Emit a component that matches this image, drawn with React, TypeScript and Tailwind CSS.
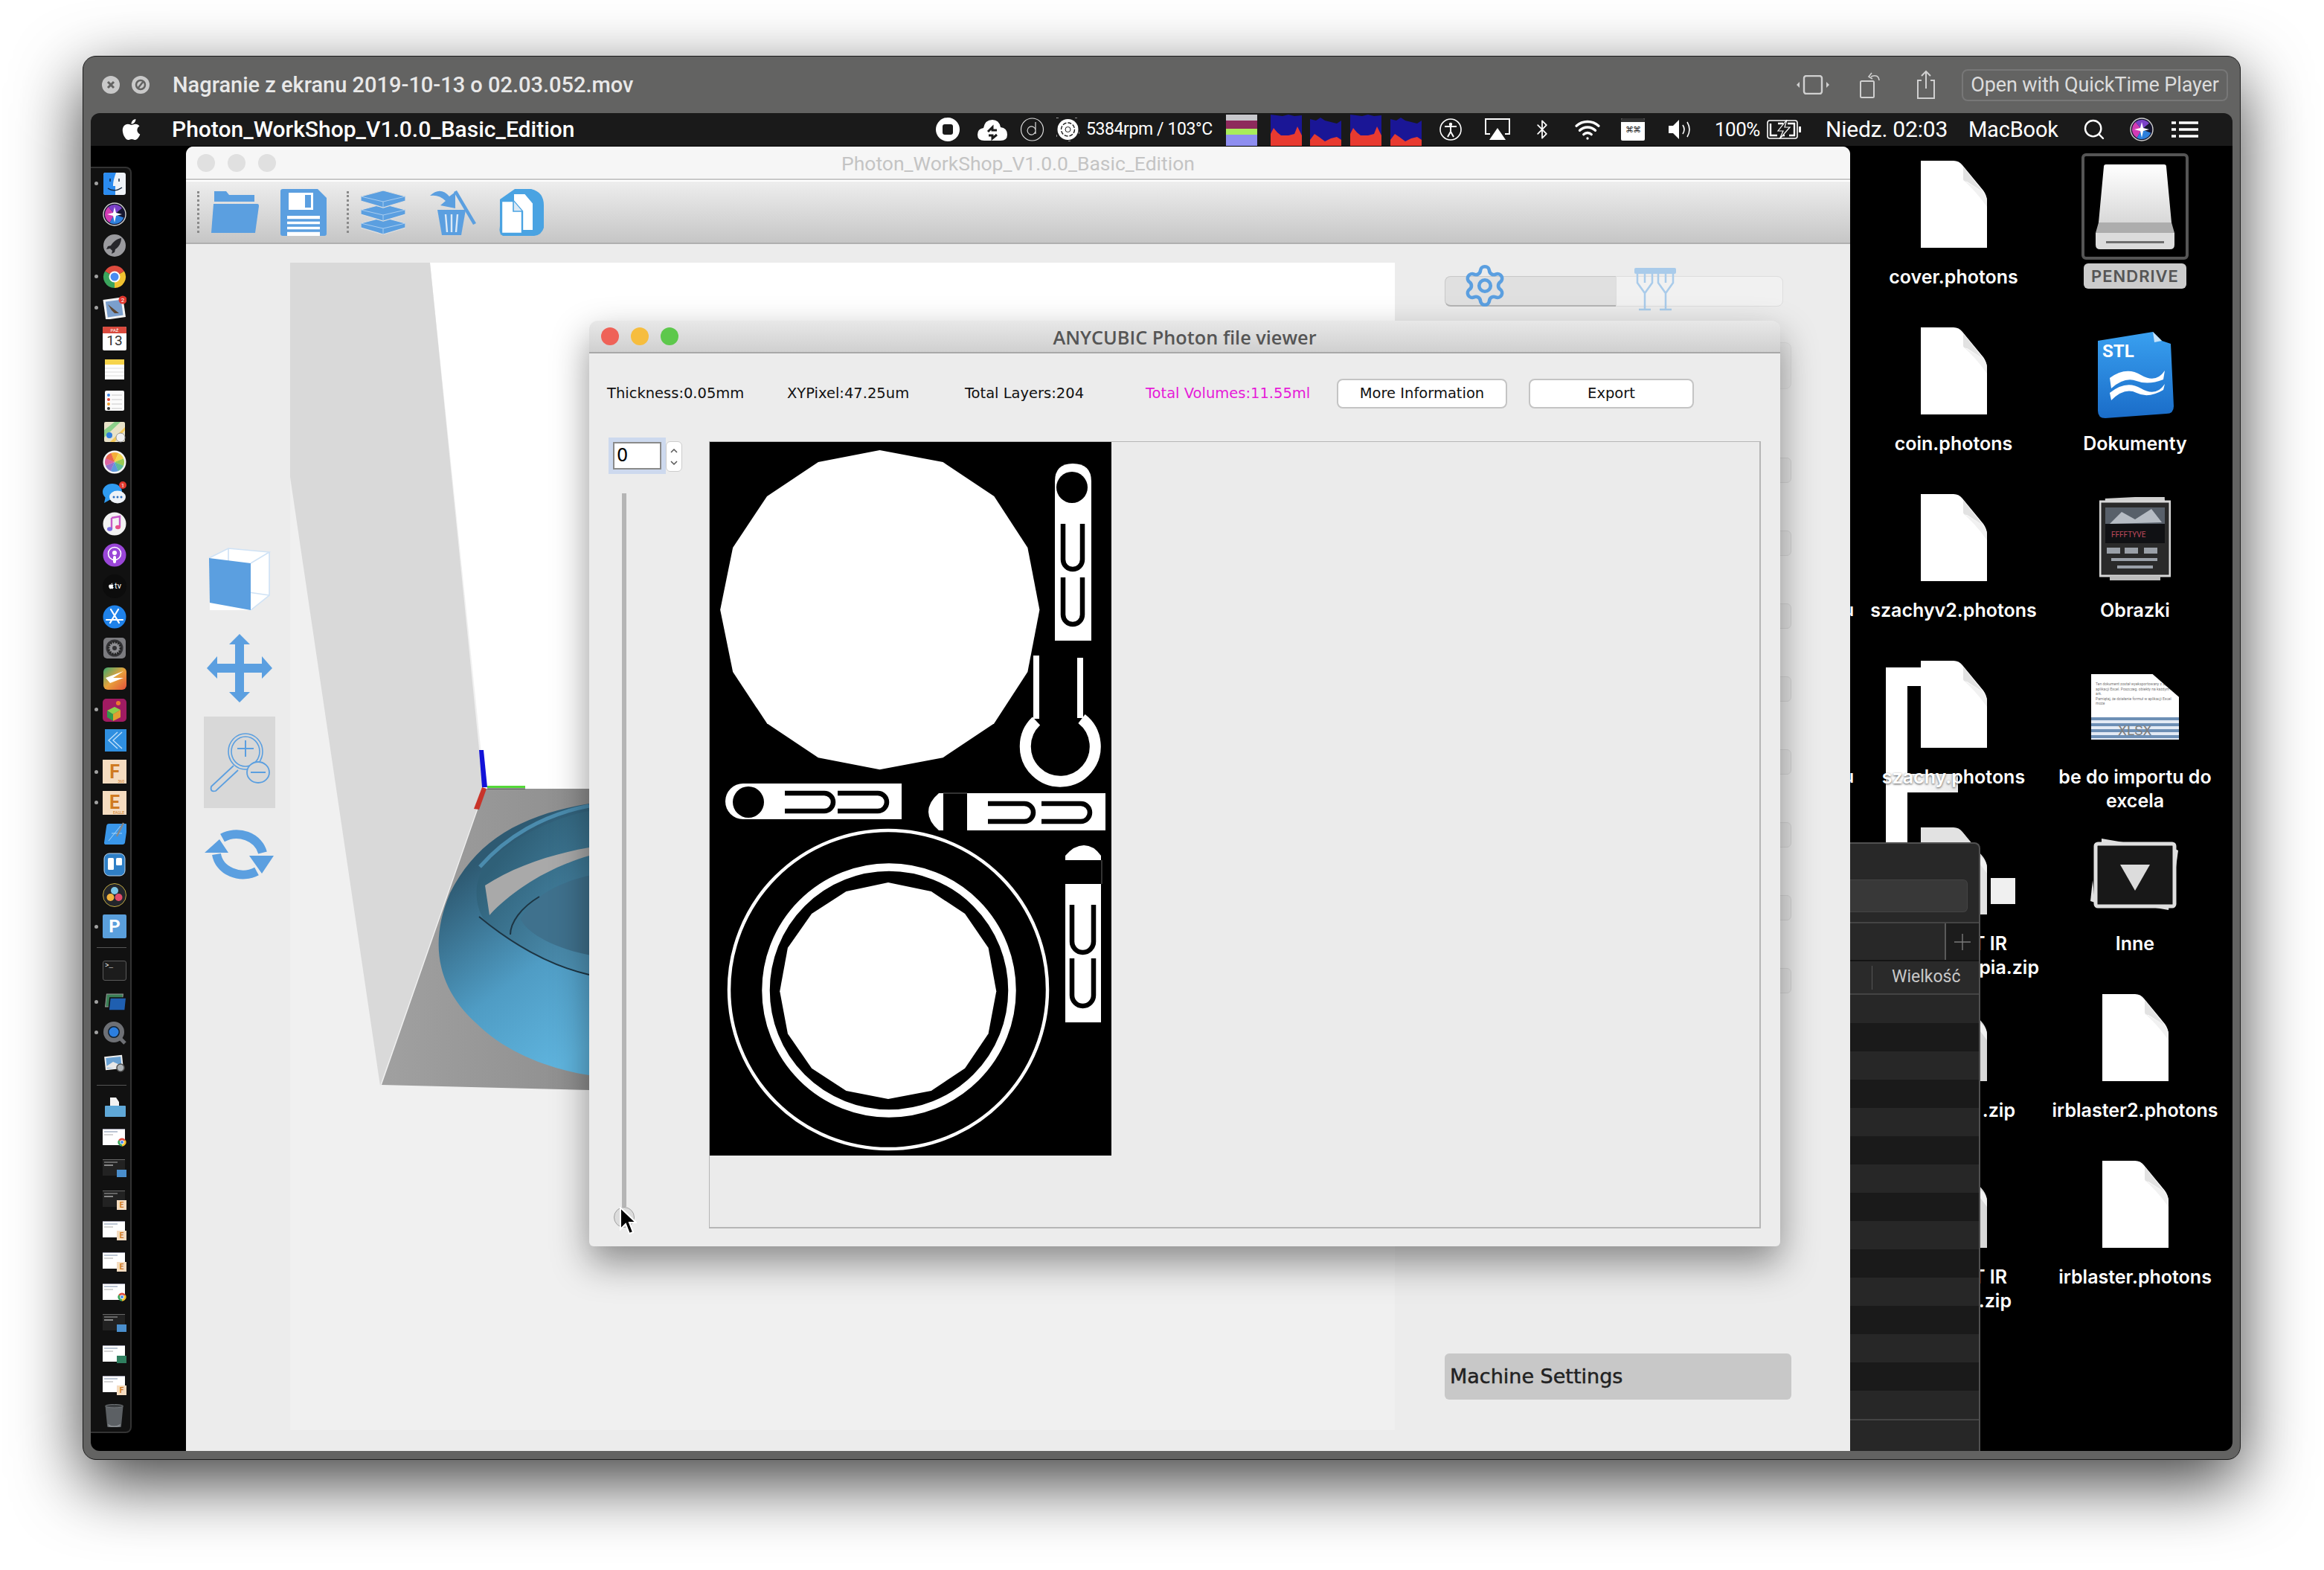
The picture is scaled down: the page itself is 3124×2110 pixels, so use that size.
import React from "react";
import { FaApple } from "react-icons/fa";
import { Settings, Search, Bluetooth, Wifi } from "lucide-react";

const BLUE = "#5b9fe0";

function sector(cx: number, cy: number, r: number, a0: number, a1: number) {
  const rad = (a: number) => (a * Math.PI) / 180;
  const x0 = cx + r * Math.cos(rad(a0));
  const y0 = cy + r * Math.sin(rad(a0));
  const x1 = cx + r * Math.cos(rad(a1));
  const y1 = cy + r * Math.sin(rad(a1));
  return `M${cx},${cy} L${x0},${y0} A${r},${r} 0 ${a1 - a0 > 180 ? 1 : 0} 1 ${x1},${y1} Z`;
}

function DocIcon({ tone = "#ffffff" }: { tone?: string }) {
  return (
    <svg width="89" height="117" viewBox="0 0 89 117">
      <path d="M0,0 H44 C49,0 53,2 56,6 L84,40 C87,44 89,49 89,54 V117 H0 Z" fill={tone} />
      <path d="M57,8 V24 C57,27 59,28 62,28 L84,42 Z" fill="#e2e2e2" />
      <path d="M57,26 L84,42 C87,46 89,50 89,54 V62 C78,46 66,34 57,26 Z" fill="#f1f1f1" />
    </svg>
  );
}

function DiskIcon() {
  return (
    <svg width="106" height="114" viewBox="0 0 106 114">
      <defs>
        <linearGradient id="diskTop" x1="0" y1="0" x2="0" y2="1">
          <stop offset="0" stopColor="#ffffff" />
          <stop offset="1" stopColor="#d8d8d8" />
        </linearGradient>
      </defs>
      <path d="M11,3 Q11,0 14,0 H92 Q95,0 95,3 L102,78 H4 Z" fill="url(#diskTop)" />
      <path d="M4,78 H102 L106,92 H0 Z" fill="#adadad" />
      <path d="M0,92 H106 V108 Q106,114 100,114 H6 Q0,114 0,108 Z" fill="#dcdcdc" />
      <rect x="14" y="103" width="78" height="3" fill="#6f6f6f" />
    </svg>
  );
}

function StlFolder() {
  return (
    <svg width="104" height="116" viewBox="0 0 104 116" className="mt-[6px]">
      <defs>
        <linearGradient id="stlBlue" x1="0" y1="0" x2="0" y2="1">
          <stop offset="0" stopColor="#39a0f0" />
          <stop offset="1" stopColor="#1a6cc8" />
        </linearGradient>
      </defs>
      <path d="M2,12 L76,0 L88,12 L100,16 L104,100 Q104,110 94,110 L12,116 Q2,116 2,106 Z" fill="url(#stlBlue)" />
      <text x="8" y="34" fontSize="24" fontWeight="700" fill="#ffffff" fontFamily="Roboto, sans-serif">STL</text>
      <path d="M18,62 Q40,46 60,58 T92,52 L90,64 Q70,72 54,66 T20,76 Z" fill="#ffffff" />
      <path d="M18,82 Q40,64 60,76 T92,70 L90,78 Q70,90 54,82 T20,92 Z" fill="#ffffff" />
      <path d="M76,0 L88,12 L78,14 Z" fill="#c6e4fb" />
    </svg>
  );
}

function PosterIcon() {
  return (
    <svg width="96" height="112" viewBox="0 0 96 112" className="mt-[4px]">
      <rect x="8" y="0" width="80" height="12" fill="#cfcfcf" transform="rotate(-3 48 6)" />
      <rect x="1" y="6" width="94" height="100" fill="#2a2a2a" stroke="#d8d8d8" strokeWidth="3" />
      <rect x="8" y="14" width="80" height="22" fill="#58606a" />
      <path d="M14,36 L30,20 L48,30 L70,16 L84,34 Z" fill="#b6bcc4" />
      <rect x="8" y="36" width="80" height="26" fill="#101114" />
      <text x="16" y="54" fontSize="10" fill="#c04a5c" fontFamily="Roboto, sans-serif">FFFFTYVE</text>
      <g fill="#9aa0a8">
        <rect x="10" y="68" width="18" height="8" />
        <rect x="34" y="68" width="18" height="8" />
        <rect x="60" y="68" width="18" height="8" />
        <rect x="16" y="82" width="62" height="4" />
        <rect x="24" y="92" width="48" height="4" />
      </g>
      <rect x="14" y="106" width="68" height="6" fill="#bcbcbc" />
    </svg>
  );
}

function XlsxIcon() {
  return (
    <div className="relative w-[118px] h-[88px] mt-[18px] bg-white overflow-hidden [clip-path:polygon(0_0,70%_0,100%_35%,100%_100%,0_100%)]">
      <div className="flex flex-col pt-[10px] pl-[6px] gap-[1px] text-[5px] leading-[6px] text-[#777] font-[Roboto,sans-serif]">
        <span>Ten dokument został wyeksportowany z aplikacji</span>
        <span>aplikacji Excel. Poszczeg. obiekty na każdym z ark.</span>
        <span>Pamiętaj, że działanie formuł w aplikacji Excel może</span>
      </div>
      <div className="flex flex-col mt-[16px] bg-[#e3eaf4]">
        <div className="h-[4px] bg-[#6d8fb5] mb-[4px]" />
        <div className="h-[4px] bg-[#6d8fb5] mb-[4px]" />
        <div className="h-[4px] bg-[#6d8fb5] mb-[4px]" />
        <div className="h-[4px] bg-[#6d8fb5] mb-[4px]" />
        <div className="h-[4px] bg-[#6d8fb5] mb-[4px]" />
      </div>
      <span className="absolute left-[36px] bottom-[3px] text-[19px] leading-[19px] text-[#808080] font-[Roboto,sans-serif]">XLSX</span>
    </div>
  );
}

function StackIcon() {
  return (
    <svg width="120" height="100" viewBox="0 0 120 100" className="mt-[15px]">
      <path d="M15,0 L50,6 H15 Z" fill="#e0e0e0" />
      <path d="M114,14 L118,16 L114,46 Z" fill="#e0e0e0" />
      <path d="M3,56 L0,84 L6,86 Z" fill="#e0e0e0" />
      <path d="M70,90 L105,96 L106,88 Z" fill="#e0e0e0" />
      <rect x="7" y="7" width="106" height="84" rx="3" fill="#181818" stroke="#dfdfdf" strokeWidth="5" />
      <path d="M40,35 H80 L60,70 Z" fill="#dcdcdc" />
    </svg>
  );
}

type DeskItem = {
  icon: React.ReactNode;
  label: { text: string; cls?: string }[];
};

const deskItems: DeskItem[] = [
  { icon: <DocIcon />, label: [{ text: "cover.photons" }] },
  { icon: <DiskIcon />, label: [] },
  { icon: <DocIcon />, label: [{ text: "coin.photons" }] },
  { icon: <StlFolder />, label: [{ text: "Dokumenty" }] },
  { icon: <DocIcon />, label: [{ text: "szachyv2.photons" }] },
  { icon: <PosterIcon />, label: [{ text: "Obrazki" }] },
  { icon: <DocIcon />, label: [{ text: "szachy.photons" }] },
  { icon: <XlsxIcon />, label: [{ text: "be do importu do" }, { text: "excela" }] },
  { icon: <DocIcon tone="#e2e2e2" />, label: [{ text: "T IR", cls: "self-end pr-[50px]" }, { text: "pia.zip", cls: "self-end pr-[7px]" }] },
  { icon: <StackIcon />, label: [{ text: "Inne" }] },
  { icon: <DocIcon tone="#d8d8d8" />, label: [{ text: ".zip", cls: "self-end pr-[39px]" }] },
  { icon: <DocIcon />, label: [{ text: "irblaster2.photons" }] },
  { icon: <DocIcon tone="#d8d8d8" />, label: [{ text: "T IR", cls: "self-end pr-[50px]" }, { text: ".zip", cls: "self-end pr-[44px]" }] },
  { icon: <DocIcon />, label: [{ text: "irblaster.photons" }] },
];

function DockGlyph({ kind }: { kind: string }) {
  switch (kind) {
    case "finder":
      return (
        <svg viewBox="0 0 32 32" className="w-full h-full">
          <rect x="1" y="1" width="30" height="30" rx="3" fill="#eef2f7" />
          <path d="M4,1 H18 C15,9 14,14 14,19 H17 V31 H4 Q1,31 1,28 V4 Q1,1 4,1 Z" fill="#2b8bef" />
          <path d="M10,9 V13 M22,9 V13 M7,22 Q16,28 26,21" stroke="#10233c" strokeWidth="1.5" fill="none" />
        </svg>
      );
    case "siri":
      return (
        <svg viewBox="0 0 32 32" className="w-full h-full">
          <circle cx="16" cy="16" r="15" fill="#15152e" stroke="#d0d0d0" strokeWidth="1.4" />
          <path d={sector(16, 16, 13, 120, 230)} fill="#d23bb4" />
          <path d={sector(16, 16, 13, 230, 320)} fill="#7a40c8" />
          <path d={sector(16, 16, 13, 20, 120)} fill="#2d7fdc" />
          <path d="M16,6 L18,14 L26,16 L18,18 L16,27 L14,18 L6,16 L14,14 Z" fill="#ffffff" />
        </svg>
      );
    case "launch":
      return (
        <svg viewBox="0 0 32 32" className="w-full h-full">
          <circle cx="16" cy="16" r="15" fill="#9a9a9e" />
          <path d="M25,6 C19,7 14,11 11,16 L7,17 L5,21 L10,20 L13,23 L12,27 L16,25 L17,21 C22,18 25,12 25,6 Z" fill="#26262b" />
        </svg>
      );
    case "chrome":
      return (
        <svg viewBox="0 0 32 32" className="w-full h-full">
          <path d={sector(16, 16, 15, 210, 330)} fill="#dd4b3e" />
          <path d={sector(16, 16, 15, 90, 210)} fill="#3ba55d" />
          <path d={sector(16, 16, 15, -30, 90)} fill="#f2c230" />
          <circle cx="16" cy="16" r="7.5" fill="#ffffff" />
          <circle cx="16" cy="16" r="5.5" fill="#4a8cf0" />
        </svg>
      );
    case "mail":
      return (
        <svg viewBox="0 0 32 32" className="w-full h-full">
          <rect x="2" y="4" width="27" height="27" fill="#f3f3f3" transform="rotate(-8 16 16)" />
          <rect x="5" y="7" width="21" height="21" fill="#7b9fcc" transform="rotate(-8 16 16)" />
          <path d="M7,12 L22,24 L16,24 L12,20 Z" fill="#5e4630" />
          <circle cx="27" cy="6" r="5.5" fill="#e0382e" />
          <text x="27" y="9" fontSize="8" fill="#ffffff" textAnchor="middle" fontFamily="Roboto, sans-serif">2</text>
        </svg>
      );
    case "cal":
      return (
        <div className="w-full h-full flex flex-col bg-white rounded-[2px] overflow-hidden">
          <div className="h-[9px] bg-[#d94a3e] text-[6px] leading-[9px] text-center text-white font-[Roboto,sans-serif]">PAŹ</div>
          <div className="flex-1 text-[19px] leading-[20px] text-center text-[#333] font-[Roboto,sans-serif]">13</div>
        </div>
      );
    case "notes":
      return (
        <svg viewBox="0 0 32 32" className="w-full h-full">
          <rect x="3" y="3" width="26" height="27" fill="#fdfdfd" />
          <rect x="3" y="3" width="26" height="7" fill="#f6d44b" />
          <path d="M3,15 H29 M3,20 H29 M3,25 H29" stroke="#dcdcdc" />
        </svg>
      );
    case "remind":
      return (
        <svg viewBox="0 0 32 32" className="w-full h-full">
          <rect x="3" y="3" width="26" height="27" rx="2" fill="#fbfbfb" />
          <circle cx="8" cy="9" r="2" fill="#3a85e8" />
          <circle cx="8" cy="15" r="2" fill="#e04a3a" />
          <circle cx="8" cy="21" r="2" fill="#f0a030" />
          <circle cx="8" cy="27" r="2" fill="#333333" />
          <path d="M12,9 H26 M12,15 H26 M12,21 H26 M12,27 H26" stroke="#c8c8c8" />
        </svg>
      );
    case "maps":
      return (
        <svg viewBox="0 0 32 32" className="w-full h-full">
          <rect x="2" y="3" width="28" height="27" rx="2" fill="#e8e2c8" />
          <path d="M2,14 L16,3 H24 L2,24 Z" fill="#8ccf8a" />
          <path d="M10,30 L30,10 V14 L16,30 Z" fill="#f4c95a" />
          <circle cx="9" cy="21" r="4" fill="#2f7fe0" />
          <circle cx="24" cy="24" r="6" fill="#f0f0f0" stroke="#999" />
        </svg>
      );
    case "photos":
      return (
        <svg viewBox="0 0 32 32" className="w-full h-full">
          <circle cx="16" cy="16" r="15.5" fill="#f4f4f4" />
          {["#f5a623", "#f3d23b", "#8ec641", "#4fb58e", "#4f8fdc", "#8a63c9", "#d8549a", "#e8553f"].map((c, i) => (
            <path key={c} d={sector(16, 16, 13, i * 45 - 112, i * 45 - 66)} fill={c} opacity="0.9" />
          ))}
        </svg>
      );
    case "msg":
      return (
        <svg viewBox="0 0 32 32" className="w-full h-full">
          <ellipse cx="13" cy="14" rx="13" ry="11" fill="#2f9bf0" />
          <path d="M4,20 L2,29 L11,24 Z" fill="#2f9bf0" />
          <ellipse cx="20" cy="21" rx="11" ry="8.5" fill="#eef2f7" />
          <g fill="#2f6fc0">
            <circle cx="15" cy="21" r="1.5" />
            <circle cx="20" cy="21" r="1.5" />
            <circle cx="25" cy="21" r="1.5" />
          </g>
          <circle cx="27" cy="5" r="5" fill="#e0382e" />
          <text x="27" y="8" fontSize="8" fill="#ffffff" textAnchor="middle" fontFamily="Roboto, sans-serif">1</text>
        </svg>
      );
    case "music":
      return (
        <svg viewBox="0 0 32 32" className="w-full h-full">
          <circle cx="16" cy="16" r="15.5" fill="#f2f2f2" />
          <path d="M12,8 L23,6 V20 M12,8 V23" stroke="#c858c8" strokeWidth="2.4" fill="none" />
          <ellipse cx="9.5" cy="23" rx="3.5" ry="2.8" fill="#7a6ce0" />
          <ellipse cx="20.5" cy="20.5" rx="3.5" ry="2.8" fill="#e8508a" />
        </svg>
      );
    case "pod":
      return (
        <svg viewBox="0 0 32 32" className="w-full h-full">
          <circle cx="16" cy="16" r="15.5" fill="#9a46d8" />
          <circle cx="16" cy="14" r="8.5" fill="none" stroke="#ffffff" strokeWidth="1.6" />
          <circle cx="16" cy="13" r="3" fill="#ffffff" />
          <rect x="14" y="17" width="4" height="10" rx="2" fill="#ffffff" />
        </svg>
      );
    case "tv":
      return (
        <div className="w-full h-full rounded-full bg-[#0c0c0c] flex items-center justify-center text-white">
          <FaApple className="w-[9px] h-[9px]" />
          <span className="text-[11px] leading-[11px] font-[Roboto,sans-serif]">tv</span>
        </div>
      );
    case "store":
      return (
        <svg viewBox="0 0 32 32" className="w-full h-full">
          <circle cx="16" cy="16" r="15.5" fill="#1f82ea" />
          <path d="M11,6 L22,24 M21,6 L10,24 M5,20 H27" stroke="#ffffff" strokeWidth="2.2" strokeLinecap="round" />
        </svg>
      );
    case "prefs":
      return (
        <svg viewBox="0 0 32 32" className="w-full h-full">
          <rect x="1" y="2" width="30" height="28" rx="5" fill="#7c7c80" />
          <circle cx="16" cy="16" r="11.5" fill="#333336" />
          <circle cx="16" cy="16" r="8" fill="#8e8e92" stroke="#222" strokeDasharray="2 1.5" strokeWidth="3" />
          <circle cx="16" cy="16" r="3" fill="#333336" />
        </svg>
      );
    case "kite":
      return (
        <svg viewBox="0 0 32 32" className="w-full h-full">
          <defs>
            <linearGradient id="kiteBg" x1="0" y1="0" x2="1" y2="1">
              <stop offset="0" stopColor="#3aa870" />
              <stop offset="0.5" stopColor="#e8a23c" />
              <stop offset="1" stopColor="#e2503a" />
            </linearGradient>
          </defs>
          <rect x="1" y="1" width="31" height="30" rx="6" fill="url(#kiteBg)" />
          <path d="M4,15 L28,6 L14,15 L28,15 L10,22 Z" fill="#ffffff" />
        </svg>
      );
    case "pink":
      return (
        <svg viewBox="0 0 32 32" className="w-full h-full">
          <rect x="0" y="1" width="32" height="31" rx="5" fill="#a01b62" />
          <path d="M6,17 L16,12 L24,16 L14,22 Z" fill="#8ed04a" />
          <path d="M6,17 L14,22 V31 L6,26 Z" fill="#2f9a4c" />
          <path d="M14,22 L24,16 V26 L14,31 Z" fill="#e0a030" />
          <circle cx="21" cy="7" r="3" fill="#ea7a30" />
        </svg>
      );
    case "blue":
      return (
        <svg viewBox="0 0 32 32" className="w-full h-full">
          <rect x="3" y="1" width="29" height="30" fill="#2f8fe0" />
          <path d="M20,5 L8,16 L20,27 M26,5 L14,16 L26,27" stroke="#bfe0fa" strokeWidth="1.4" fill="none" />
        </svg>
      );
    case "F":
    case "E":
      return (
        <div className="relative w-full h-full flex items-center justify-center bg-[#f5dcc0] text-[25px] leading-[25px] font-bold text-[#cf7a22] font-[Roboto,sans-serif]">
          {kind}
          <span className="absolute bottom-0 right-[3px] text-[5px] leading-[6px] font-normal text-[#cf7a22]">{kind === "F" ? "360" : "EAGLE"}</span>
        </div>
      );
    case "xcode":
      return (
        <svg viewBox="0 0 32 32" className="w-full h-full">
          <rect x="2" y="3" width="28" height="28" rx="3" fill="#3a97ea" transform="skewX(-8) translate(4 0)" />
          <path d="M8,26 L24,6 M12,16 H26" stroke="#a6d4f8" strokeWidth="1" />
          <path d="M28,2 L19,20" stroke="#888" strokeWidth="2.4" />
        </svg>
      );
    case "trello":
      return (
        <svg viewBox="0 0 32 32" className="w-full h-full">
          <rect x="2" y="1" width="28" height="30" rx="7" fill="#2f7fc6" stroke="#bcd7ef" />
          <rect x="7" y="7" width="8" height="16" rx="1.5" fill="#ffffff" />
          <rect x="18" y="7" width="8" height="10" rx="1.5" fill="#ffffff" />
        </svg>
      );
    case "resolve":
      return (
        <svg viewBox="0 0 32 32" className="w-full h-full">
          <circle cx="16" cy="16" r="15.5" fill="#23262b" stroke="#c0a840" />
          <circle cx="16" cy="10" r="5" fill="#7dc7e8" />
          <circle cx="10.5" cy="19" r="5" fill="#f2b33d" />
          <circle cx="21.5" cy="19" r="5" fill="#e24b6a" />
        </svg>
      );
    case "P":
      return (
        <div className="w-full h-full flex items-center justify-center rounded-[2px] bg-[#5a9fdc] text-white text-[24px] leading-[24px] font-bold font-[Roboto,sans-serif]">P</div>
      );
    case "term":
      return (
        <div className="w-full h-[27px] rounded-[3px] bg-[#1c1c1c] border border-[#5a5a5a] pl-[2px] text-[9px] leading-[12px] text-white font-['Liberation_Mono',monospace]">&gt;_</div>
      );
    case "par":
      return (
        <svg viewBox="0 0 32 32" className="w-full h-full">
          <rect x="3" y="6" width="22" height="17" fill="#3a7f56" stroke="#9a9a9a" transform="skewX(-6) translate(3 0)" />
          <rect x="8" y="11" width="22" height="17" fill="#1f5fb0" stroke="#111" strokeWidth="1.6" transform="skewX(-6) translate(3 0)" />
        </svg>
      );
    case "qt":
      return (
        <svg viewBox="0 0 32 32" className="w-full h-full">
          <circle cx="15" cy="15" r="11" fill="#123" stroke="#6e7075" strokeWidth="6" />
          <circle cx="15" cy="15" r="6.5" fill="#2c7fe0" />
          <path d="M22,22 L30,30" stroke="#6e7075" strokeWidth="5" />
        </svg>
      );
    case "prev":
      return (
        <svg viewBox="0 0 32 32" className="w-full h-full">
          <rect x="3" y="6" width="24" height="18" fill="#eee" transform="rotate(-6 15 15)" />
          <rect x="5" y="8" width="20" height="14" fill="#6aa2d4" transform="rotate(-6 15 15)" />
          <path d="M5,20 L14,14 L25,19 V22 H5 Z" fill="#e8e8e8" />
          <circle cx="24" cy="22" r="5" fill="#aeb4b8" stroke="#555" strokeWidth="1.6" />
        </svg>
      );
    case "folder":
      return (
        <svg viewBox="0 0 32 32" className="w-full h-full">
          <path d="M10,4 H18 L22,10 V16 H10 Z" fill="#f2f2f2" />
          <rect x="3" y="15" width="28" height="15" rx="1" fill="#5fa8d8" />
        </svg>
      );
    case "trash":
      return (
        <svg viewBox="0 0 32 36" className="w-full h-full">
          <path d="M2,3 H29 L26,34 Q26,35 23,35 H8 Q5,35 5,34 Z" fill="#5c6064" />
          <ellipse cx="15.5" cy="3" rx="13.5" ry="2.5" fill="#3c3f42" stroke="#7a7e82" />
          <path d="M6,30 Q15,36 25,30 L24,34 Q15,36 7,34 Z" fill="#888c90" />
        </svg>
      );
    default:
      return null;
  }
}

function ShotThumb({ kind }: { kind: string }) {
  const dark = kind.startsWith("d");
  const badge = kind.slice(1);
  return (
    <div className="relative w-[34px] h-[24px]">
      <div className={dark ? "w-[30px] h-[22px] bg-[#222] border-t border-[#666]" : "w-[30px] h-[22px] bg-white border-t border-[#99a]"}>
        <div className={dark ? "mt-[2px] ml-[2px] w-[18px] h-[2px] bg-[#666]" : "mt-[2px] ml-[2px] w-[18px] h-[2px] bg-[#bcc6d4]"} />
        <div className={dark ? "mt-[2px] ml-[2px] w-[12px] h-[2px] bg-[#888]" : "mt-[2px] ml-[2px] w-[12px] h-[2px] bg-[#d4d4d4]"} />
      </div>
      {badge === "C" && (
        <div className="absolute right-0 bottom-0 w-[12px] h-[12px]">
          <DockGlyph kind="chrome" />
        </div>
      )}
      {(badge === "E" || badge === "F") && (
        <div className="absolute right-0 bottom-[-2px] w-[13px] h-[13px] bg-[#f5dcc0] text-[10px] leading-[13px] text-center font-bold text-[#cf7a22] font-[Roboto,sans-serif]">{badge}</div>
      )}
      {badge === "B" && <div className="absolute right-0 bottom-0 w-[13px] h-[10px] bg-[#4a8ecc]" />}
      {badge === "G" && <div className="absolute right-0 bottom-0 w-[13px] h-[10px] bg-[#2f7f5f]" />}
    </div>
  );
}

const dockA: [string, boolean][] = [
  ["finder", true], ["siri", false], ["launch", false], ["chrome", true], ["mail", true], ["cal", false],
  ["notes", false], ["remind", false], ["maps", false], ["photos", false], ["msg", false], ["music", false],
  ["pod", false], ["tv", false], ["store", false], ["prefs", false], ["kite", false], ["pink", true],
  ["blue", false], ["F", true], ["E", true], ["xcode", false], ["trello", false], ["resolve", false], ["P", true],
];
const dockB: [string, boolean][] = [["term", false], ["par", true], ["qt", true], ["prev", false]];
const dockC = ["wC", "dB", "dE", "wE", "wE", "wC", "dB", "wG", "wF"];

function DockRow({ dot, children }: { dot?: boolean; children: React.ReactNode }) {
  return (
    <div className="flex items-center h-[41.6px] shrink-0 pl-[5px]">
      <span className={dot ? "w-[5px] h-[5px] rounded-full bg-[#a0a0a0]" : "w-[5px] h-[5px]"} />
      <div className="ml-[6px] w-[32px] h-[32px] flex items-center justify-center">{children}</div>
    </div>
  );
}

function Dock() {
  return (
    <div className="absolute left-0 top-[28px] w-[55px] h-[1702px] bg-[#111111] border-y-2 border-r-2 border-[#333333] rounded-r-[8px] flex flex-col overflow-hidden">
      {dockA.map(([k, on]) => (
        <DockRow key={k} dot={on}>
          <DockGlyph kind={k} />
        </DockRow>
      ))}
      <div className="ml-[8px] mt-[7px] mb-[10px] h-[1px] w-[40px] shrink-0 bg-[#555]" />
      {dockB.map(([k, on]) => (
        <DockRow key={k} dot={on}>
          <DockGlyph kind={k} />
        </DockRow>
      ))}
      <div className="ml-[8px] mt-[8px] mb-[7px] h-[1px] w-[40px] shrink-0 bg-[#555]" />
      <DockRow>
        <DockGlyph kind="folder" />
      </DockRow>
      {dockC.map((k, i) => (
        <DockRow key={i}>
          <ShotThumb kind={k} />
        </DockRow>
      ))}
      <DockRow>
        <DockGlyph kind="trash" />
      </DockRow>
    </div>
  );
}

function MiniGraph({ peak }: { peak: boolean }) {
  return (
    <svg width="42" height="42" viewBox="0 0 42 42" className="shrink-0 self-end">
      <path
        d={peak ? "M0,0 L8,1 16,2 24,0 32,2 42,1 V42 H0 Z" : "M0,6 L8,8 14,4 20,8 28,10 36,12 42,8 V42 H0 Z"}
        fill="#1a1696"
      />
      <path
        d={peak ? "M0,26 L4,18 9,24 14,28 24,28 32,26 36,16 42,28 V42 H0 Z" : "M0,34 L6,26 12,30 20,36 28,32 36,30 42,34 V42 H0 Z"}
        fill="#e83a30"
      />
    </svg>
  );
}

function MenuBar() {
  return (
    <div className="flex items-center h-[44px] bg-[#1a1a1a] rounded-t-[12px] text-white font-[Roboto,sans-serif] whitespace-nowrap">
      <FaApple className="ml-[41px] w-[27px] h-[32px] shrink-0" />
      <span className="ml-[41px] w-[540px] text-[30px] leading-[44px] font-medium">Photon_WorkShop_V1.0.0_Basic_Edition</span>
      {/* status icons */}
      <svg width="32" height="32" viewBox="0 0 32 32" className="ml-[487px] shrink-0">
        <circle cx="16" cy="16" r="16" fill="#fff" />
        <rect x="9" y="9" width="14" height="14" rx="3" fill="#1a1a1a" />
      </svg>
      <svg width="40" height="30" viewBox="0 0 40 30" className="ml-[24px] shrink-0">
        <path d="M9,30 Q0,30 0,22 Q0,14 8,13 Q10,2 20,2 Q29,2 31,12 Q40,13 40,22 Q40,30 31,30 Z" fill="#fff" />
        <path d="M14,18 L20,12 V16 H26 M26,22 L20,27 V23 H15" stroke="#1a1a1a" strokeWidth="3" fill="none" />
      </svg>
      <svg width="33" height="32" viewBox="0 0 33 32" className="ml-[17px] shrink-0">
        <circle cx="16.5" cy="16" r="15" fill="none" stroke="#ddd" strokeWidth="1.2" />
        <path d="M21,6 V22 M21,17 A5.5,5.5 0 1 0 21,18" fill="none" stroke="#ddd" strokeWidth="1.2" />
      </svg>
      <svg width="31" height="32" viewBox="0 0 31 32" className="ml-[16px] shrink-0">
        <rect x="0" y="0" width="31" height="32" fill="#1a1a1a" stroke="#fff" strokeDasharray="3 22" />
        <circle cx="15.5" cy="16" r="14" fill="#fff" />
        <circle cx="15.5" cy="16" r="9" fill="none" stroke="#1a1a1a" strokeWidth="1.4" strokeDasharray="5 2" />
        <circle cx="15.5" cy="16" r="3.5" fill="none" stroke="#1a1a1a" />
      </svg>
      <span className="ml-[9px] w-[178px] text-[23px] tracking-[-0.4px] leading-[44px]">5384rpm / 103°C</span>
      <div className="ml-[10px] w-[42px] h-[42px] self-end flex flex-col shrink-0">
        <div className="h-[8px] bg-[#c8c8cc]" />
        <div className="h-[11px] bg-[#8e2a5c]" />
        <div className="h-[8px] bg-[#a8ec5c]" />
        <div className="flex-1 bg-[#8e8ef0]" />
      </div>
      <div className="ml-[18px] flex self-end">
        <MiniGraph peak />
        <div className="ml-[11px]">
          <MiniGraph peak={false} />
        </div>
        <div className="ml-[12px]">
          <MiniGraph peak />
        </div>
        <div className="ml-[12px]">
          <MiniGraph peak={false} />
        </div>
      </div>
      <svg width="30" height="30" viewBox="0 0 30 30" className="ml-[24px] shrink-0">
        <circle cx="15" cy="15" r="14" fill="none" stroke="#fff" strokeWidth="1.6" />
        <circle cx="15" cy="8" r="2.2" fill="#fff" />
        <path d="M7,11 H23 M15,11 V18 L11,25 M15,18 L19,25" stroke="#fff" strokeWidth="2" fill="none" />
      </svg>
      <svg width="36" height="30" viewBox="0 0 36 30" className="ml-[30px] shrink-0">
        <path d="M8,21 H2 V1 H34 V21 H28" fill="none" stroke="#fff" strokeWidth="2" />
        <path d="M18,13 L29,29 H7 Z" fill="#fff" />
      </svg>
      <Bluetooth className="ml-[28px] w-[28px] h-[30px] shrink-0" strokeWidth={1.5} />
      <Wifi className="ml-[26px] w-[42px] h-[36px] shrink-0" strokeWidth={2.2} />
      <div className="ml-[24px] w-[32px] h-[30px] rounded-[2px] bg-white shrink-0 flex flex-col items-center overflow-hidden">
        <div className="h-[5px] w-full bg-[#333]" />
        <span className="text-[11px] leading-[22px] tracking-[-1px] text-[#222] font-['DejaVu_Sans',sans-serif]">⌘⌘</span>
      </div>
      <svg width="34" height="28" viewBox="0 0 34 28" className="ml-[32px] shrink-0">
        <path d="M0,9 H6 L14,1 V27 L6,19 H0 Z" fill="#fff" />
        <path d="M19,8 Q23,14 19,20 M25,4 Q31,14 25,24" fill="none" stroke="#fff" strokeWidth="1.6" />
      </svg>
      <span className="ml-[28px] w-[61px] text-[26px] tracking-[-0.5px] leading-[44px]">100%</span>
      <svg width="46" height="26" viewBox="0 0 46 26" className="ml-[9px] shrink-0">
        <rect x="1" y="1" width="40" height="24" rx="3" fill="none" stroke="#fff" strokeWidth="1.6" />
        <path d="M5,5 V21 H14 M15,5 H22 M20,21 H24 M28,5 H37 V21 H30" fill="none" stroke="#fff" strokeWidth="2.4" />
        <path d="M27,0 L15,15 H22 L17,26 L31,10 H24 Z" fill="#1a1a1a" stroke="#fff" strokeWidth="1.2" />
        <rect x="43" y="9" width="3" height="8" fill="#fff" />
      </svg>
      <span className="ml-[33px] w-[165px] text-[30px] tracking-[-0.2px] leading-[44px]">Niedz. 02:03</span>
      <span className="ml-[27px] w-[121px] text-[29px] tracking-[-0.2px] leading-[44px]">MacBook</span>
      <Search className="ml-[32px] w-[32px] h-[32px] shrink-0" strokeWidth={1.8} />
      <div className="ml-[32px] w-[32px] h-[32px] shrink-0">
        <DockGlyph kind="siri" />
      </div>
      <svg width="36" height="22" viewBox="0 0 36 22" className="ml-[24px] shrink-0">
        <path d="M0,2 H6 M10,2 H36 M0,11 H6 M10,11 H36 M0,20 H6 M10,20 H36" stroke="#fff" strokeWidth="3.6" />
      </svg>
    </div>
  );
}

function TitleBar() {
  return (
    <div className="flex items-center h-[76px] pl-[25px] pr-[16px] text-[#e8e8e8] font-[Roboto,sans-serif] whitespace-nowrap">
      <svg width="24" height="24" viewBox="0 0 24 24" className="shrink-0">
        <circle cx="12" cy="12" r="12" fill="#c9c9c9" />
        <path d="M8,8 L16,16 M16,8 L8,16" stroke="#636362" strokeWidth="3" />
      </svg>
      <svg width="24" height="24" viewBox="0 0 24 24" className="ml-[16px] shrink-0">
        <circle cx="12" cy="12" r="12" fill="#c9c9c9" />
        <circle cx="12" cy="12" r="6" fill="none" stroke="#636362" strokeWidth="2.5" />
        <path d="M16,7 L8,17" stroke="#636362" strokeWidth="2.5" />
      </svg>
      <span className="ml-[31px] text-[29px] leading-[76px] font-medium">Nagranie z ekranu 2019-10-13 o 02.03.052.mov</span>
      <div className="ml-auto flex items-center">
        <svg width="46" height="26" viewBox="0 0 46 26" className="shrink-0">
          <rect x="10" y="1" width="24" height="24" rx="3" fill="none" stroke="#d0d0d0" strokeWidth="2.4" />
          <path d="M0,13 L4,9 V17 Z M44,13 L40,9 V17 Z" fill="#d0d0d0" />
        </svg>
        <svg width="30" height="36" viewBox="0 0 30 36" className="ml-[38px] shrink-0">
          <rect x="2" y="13" width="18" height="22" rx="1.5" fill="none" stroke="#d0d0d0" strokeWidth="2" />
          <path d="M16,7 Q26,3 27,12 M17,2 L13,7 L18,10" fill="none" stroke="#d0d0d0" strokeWidth="1.6" />
        </svg>
        <svg width="26" height="40" viewBox="0 0 26 40" className="ml-[47px] shrink-0">
          <path d="M7,14 H2 V38 H24 V14 H19 M13,25 V2 M7,8 L13,2 L19,8" fill="none" stroke="#d0d0d0" strokeWidth="2" />
        </svg>
        <button className="ml-[35px] w-[358px] h-[43px] rounded-[8px] border-2 border-[#777] text-[27px] leading-[39px] tracking-[-0.1px] text-[#dcdcdc] text-center">Open with QuickTime Player</button>
      </div>
    </div>
  );
}

function ToolbarIcons() {
  return (
    <div className="flex items-center h-full pl-[15px]">
      <span className="h-[56px] border-l-[3px] border-dotted border-[#8a8a8a]" />
      <svg width="64" height="56" viewBox="0 0 64 56" className="ml-[16px]">
        <path d="M4,0 H20 L24,5 H58 V14 H4 Z" fill={BLUE} />
        <path d="M3,17 H62 Q64,17 64,20 L59,56 H0 Z" fill={BLUE} />
      </svg>
      <svg width="62" height="63" viewBox="0 0 62 63" className="ml-[29px]">
        <path d="M3,0 H50 L62,12 V60 Q62,63 59,63 H3 Q0,63 0,60 V3 Q0,0 3,0 Z" fill={BLUE} />
        <rect x="11" y="5" width="33" height="23" fill="#fff" />
        <rect x="33" y="8" width="8" height="17" fill={BLUE} />
        <rect x="9" y="36" width="44" height="27" fill="#fff" />
        <path d="M9,42 H53 M9,49 H53 M9,56 H53" stroke={BLUE} strokeWidth="3.5" />
      </svg>
      <span className="ml-[27px] h-[56px] border-l-[3px] border-dotted border-[#8a8a8a]" />
      <svg width="60" height="59" viewBox="0 0 60 59" className="ml-[16px]">
        {[36, 18, 0].map((y) => (
          <g key={y} transform={`translate(0 ${y})`}>
            <path d="M30,0 L60,8 V14 L30,23 L0,14 V8 Z" fill={BLUE} stroke="#dedede" strokeWidth="1.2" />
            <path d="M0,8 L30,15 L60,8 M30,15 V23" stroke="#a9cdef" strokeWidth="1" fill="none" />
          </g>
        ))}
      </svg>
      <svg width="62" height="62" viewBox="0 0 62 62" className="ml-[33px]">
        <path d="M0,9 Q14,-4 26,10 L34,4 L34,26 L14,22 L21,16 Q12,7 0,9 Z" fill={BLUE} />
        <path d="M36,2 L62,46 L58,48 L32,4 Z" fill={BLUE} />
        <path d="M10,28 H48 L42,62 H16 Z" fill={BLUE} />
        <path d="M21,34 L23,58 M29,34 V58 M37,34 L35,58" stroke="#dce9f6" strokeWidth="2.4" />
      </svg>
      <svg width="61" height="63" viewBox="0 0 61 63" className="ml-[30px]">
        <path d="M22,0 H44 Q61,4 61,22 V52 Q58,62 48,63 H6 Q0,60 2,50 V14 Z" fill="#4aa3e2" />
        <path d="M20,6 H36 L47,19 V56 H20 Z" fill="#fff" stroke="#4aa3e2" strokeWidth="2" />
        <path d="M4,16 H20 L32,30 V60 H4 Z" fill="#fff" stroke="#4aa3e2" strokeWidth="2.4" />
        <path d="M20,16 V30 H32" fill="#dbe9f5" stroke="#4aa3e2" strokeWidth="1.6" />
      </svg>
    </div>
  );
}

function SideTools() {
  return (
    <div className="w-[140px] shrink-0 flex flex-col items-center pt-[408px] pl-[3px]">
      <svg width="84" height="84" viewBox="0 0 84 84">
        <path d="M27,1 L82,6 V64 L57,84 H2 V14 Z" fill="#fff" />
        <path d="M1,14 L27,1 L82,6 L57,21 M27,1 V56 L82,64 M82,6 V64 L57,84" fill="none" stroke="#cfe2f5" strokeWidth="1.6" />
        <path d="M1,14 L57,21 V84 L2,74 Z" fill={BLUE} />
      </svg>
      <svg width="88" height="92" viewBox="0 0 88 92" className="mt-[32px]">
        <path
          d="M44,0 L58,14 H50 V40 H74 V30 L88,46 L74,60 V52 H50 V78 H58 L44,92 L30,78 H38 V52 H14 V60 L0,46 L14,30 V40 H38 V14 H30 Z"
          fill={BLUE}
        />
      </svg>
      <div className="mt-[19px] w-[96px] h-[123px] bg-[#d8d8d8] flex items-center justify-center">
        <svg width="84" height="84" viewBox="0 0 84 84" fill="none" stroke={BLUE}>
          <ellipse cx="50" cy="27" rx="23" ry="24" strokeWidth="1.6" />
          <ellipse cx="50" cy="27" rx="19" ry="20" strokeWidth="1.6" />
          <path d="M50,12 V34 M39,23 H61" strokeWidth="2" />
          <path d="M34,46 L4,74 Q2,82 10,80 L40,52" strokeWidth="1.8" />
          <ellipse cx="67" cy="55" rx="15" ry="14" fill="#d8d8d8" strokeWidth="1.8" />
          <path d="M57,55 H77" strokeWidth="2" />
        </svg>
      </div>
      <svg width="93" height="81" viewBox="0 0 93 81" className="mt-[22px]" fill="none">
        <path d="M24,18 A36,32 0 0 1 78,38" stroke={BLUE} strokeWidth="12" />
        <path d="M70,63 A36,32 0 0 1 16,40" stroke={BLUE} strokeWidth="12" />
        <path d="M0,38 L20,20 L32,38 Z M60,42 H93 L77,66 Z" fill={BLUE} />
      </svg>
    </div>
  );
}

function Scene() {
  return (
    <svg width="1485" height="1569" viewBox="390 353 1485 1569" className="block">
      <defs>
        <linearGradient id="bowlOut" gradientUnits="userSpaceOnUse" x1="600" y1="1190" x2="770" y2="1420">
          <stop offset="0" stopColor="#2e5a72" />
          <stop offset="0.55" stopColor="#4f9cc4" />
          <stop offset="1" stopColor="#5fb4de" />
        </linearGradient>
        <linearGradient id="bowlIn" gradientUnits="userSpaceOnUse" x1="650" y1="1180" x2="792" y2="1300">
          <stop offset="0" stopColor="#2f6078" />
          <stop offset="1" stopColor="#5095b8" />
        </linearGradient>
        <linearGradient id="floorTone" gradientUnits="userSpaceOnUse" x1="520" y1="0" x2="800" y2="0">
          <stop offset="0" stopColor="#a0a0a0" />
          <stop offset="1" stopColor="#8e8e8e" />
        </linearGradient>
      </defs>
      <rect x="390" y="353" width="1485" height="1569" fill="#f0f0f0" />
      <path d="M578,353 H1875 V1060 H652 Z" fill="#ffffff" />
      <path d="M390,353 H578 L644,1006 L650,1062 L511,1459 L390,641 Z" fill="#d9d9d9" />
      <path d="M652,1060 H1400 V1480 L513,1458 Z" fill="url(#floorTone)" />
      <path d="M1000,1080 H792 C700,1095 640,1130 605,1200 C575,1270 590,1330 640,1375 C680,1415 740,1437 792,1445 L1000,1470 Z" fill="url(#bowlOut)" />
      <path d="M1000,1090 H792 C740,1100 690,1125 650,1165 C635,1190 640,1220 650,1235 C690,1270 740,1298 792,1310 L1000,1320 Z" fill="url(#bowlIn)" />
      <path d="M792,1083 C730,1095 680,1125 645,1165" fill="none" stroke="#4b8cae" strokeWidth="5" />
      <path d="M1000,1125 L792,1139 C740,1148 690,1165 652,1190 L658,1230 C690,1195 740,1165 792,1150 L1000,1150 Z" fill="#a9a9a9" />
      <path d="M800,1175 C750,1185 715,1205 700,1235 C705,1250 740,1275 800,1285 Z" fill="#3f718d" />
      <path d="M644,1232 C690,1270 740,1298 792,1310" fill="none" stroke="#1d3442" strokeWidth="2" />
      <path d="M686,1256 C686,1240 700,1220 725,1205" fill="none" stroke="#1d3442" strokeWidth="2" />
      <path d="M644,1008 L650,1008 L655,1058 L648,1058 Z" fill="#1212d8" />
      <path d="M655,1056 H706 V1059 H655 Z" fill="#54d838" />
      <path d="M655,1060 H706" stroke="#333" strokeWidth="1" />
      <path d="M648,1058 L654,1060 L644,1088 L637,1087 Z" fill="#c8342a" />
    </svg>
  );
}

function RightPanel() {
  return (
    <div className="w-[612px] shrink-0 flex flex-col pl-[67px] pr-[79px] pt-[43px] pb-[69px] bg-[#ececec]">
      <div className="relative flex h-[41px] w-[455px]">
        <div className="w-[230px] h-full bg-[#e0e0e0] rounded-l-[8px] border border-[#c8c8c8] border-b-2 border-b-[#b4b4b4] border-r-0" />
        <div className="flex-1 h-full bg-[#f1f1f1] rounded-r-[8px] border border-[#dddddd]" />
        <Settings className="absolute left-[23px] top-[-18px] w-[62px] h-[62px] text-[#5b9fe0]" strokeWidth={1.8} />
        <svg width="56" height="58" viewBox="0 0 56 58" className="absolute left-[255px] top-[-11px]">
          <g fill="none" stroke="#a9cbea" strokeWidth="2.5">
            <path d="M4,4 V20 L14,34 L24,20 V4 M14,34 V56 M6,56 H22" />
            <path d="M32,4 V20 L42,34 L52,20 V4 M42,34 V56 M34,56 H50" />
            <path d="M14,4 V20 M42,4 V20" />
          </g>
          <rect x="0" y="0" width="56" height="8" rx="2" fill="#a9cbea" />
        </svg>
      </div>
      <div className="mt-[48px] h-[63px] w-[466px] rounded-[8px] bg-[#e8e8e8] border border-[#dfdfdf]" />
      <div className="mt-[92px] flex flex-col gap-[64px] w-[466px]">
        {[0, 1, 2, 3, 4, 5, 6, 7].map((i) => (
          <div key={i} className="h-[34px] rounded-[6px] bg-[#e6e6e6] border border-[#d8d8d8]" />
        ))}
      </div>
      <div className="mt-auto h-[62px] w-[466px] rounded-[6px] bg-[#c8c8c8] flex items-center pl-[7px] text-[27px] text-[#222] font-['DejaVu_Sans',sans-serif] [-webkit-text-stroke:0.5px_#222]">
        Machine Settings
      </div>
    </div>
  );
}

function AppWindow() {
  return (
    <div className="absolute left-[128px] top-[1px] w-[2237px] h-[1753px] flex flex-col bg-[#ececec] rounded-t-[10px] overflow-hidden">
      <div className="flex items-center h-[45px] bg-[#f6f6f6] border-b-2 border-[#c8c8c8] font-[Roboto,sans-serif] whitespace-nowrap">
        <div className="flex gap-[17px] pl-[15px]">
          <span className="w-[24px] h-[24px] rounded-full bg-[#e0e0e0]" />
          <span className="w-[24px] h-[24px] rounded-full bg-[#e0e0e0]" />
          <span className="w-[24px] h-[24px] rounded-full bg-[#e0e0e0]" />
        </div>
        <span className="ml-[760px] pt-[2px] text-[26.5px] text-[#c4c4c4]">Photon_WorkShop_V1.0.0_Basic_Edition</span>
      </div>
      <div className="h-[86px] shrink-0 border-t-2 border-white border-b-2 border-b-[#b0b0b0] bg-gradient-to-b from-[#eeeeee] to-[#c6c6c6]">
        <ToolbarIcons />
      </div>
      <div className="flex-1 flex min-h-0">
        <SideTools />
        <div className="w-[1485px] shrink-0 mt-[25px] mb-[28px]">
          <Scene />
        </div>
        <RightPanel />
      </div>
    </div>
  );
}

function PreviewImage() {
  const disc: [number, number][] = [
    [855, 403], [1040, 438], [1190, 538], [1288, 688], [1323, 870], [1288, 1052], [1190, 1203], [1040, 1303],
    [855, 1338], [675, 1303], [525, 1203], [425, 1052], [388, 870], [425, 688], [525, 538], [675, 438],
  ];
  const small: [number, number][] = [
    [683, 395], [845, 430], [972, 517], [1060, 650], [1090, 820], [1060, 985], [972, 1120], [845, 1208],
    [683, 1240], [525, 1208], [395, 1120], [305, 985], [275, 820], [305, 650], [395, 517], [525, 430],
  ];
  const discPts = disc.map(([x, y]) => `${x / 2.178 - 164},${y / 2.178 - 174}`).join(" ");
  const smallPts = small.map(([x, y]) => `${x / 2.8 - 4},${y / 2.904 + 456}`).join(" ");
  const slotV = (x0: number, x1: number, y0: number, y1: number) =>
    `M${x0},${y0} V${y1 - (x1 - x0) / 2} A${(x1 - x0) / 2},${(x1 - x0) / 2} 0 0 0 ${x1},${y1 - (x1 - x0) / 2} V${y0}`;
  const slotH = (x0: number, x1: number, y0: number, y1: number) =>
    `M${x0},${y0} H${x1 - (y1 - y0) / 2} A${(y1 - y0) / 2},${(y1 - y0) / 2} 0 0 1 ${x1 - (y1 - y0) / 2},${y1} H${x0}`;
  return (
    <svg width="540" height="959" viewBox="0 0 540 959" className="block shrink-0">
      <rect width="540" height="959" fill="#000" />
      <polygon points={discPts} fill="#fff" />
      <path d="M464,53 Q464,29 488,29 Q513,29 513,53 V267 H464 Z" fill="#fff" />
      <circle cx="487" cy="61" r="21" fill="#000" />
      <g fill="none" stroke="#000" strokeWidth="6.5">
        <path d={slotV(475, 501, 110, 171)} />
        <path d={slotV(475, 501, 182, 245)} />
      </g>
      <g fill="none" stroke="#fff">
        <path d="M439,287 V372" strokeWidth="8" />
        <path d="M498,290 V371" strokeWidth="8" />
        <path d="M439,375 A47,47 0 1 0 500,372" strokeWidth="15" />
      </g>
      <path d="M45,459 H258 V507 H45 A24,24 0 0 1 45,459 Z" fill="#fff" />
      <circle cx="52" cy="484" r="21" fill="#000" />
      <path d="M314,472 V522 H308 Q294,510 294,497 Q294,484 308,472 Z" fill="#fff" />
      <path d="M314,472 H346" stroke="#666" strokeWidth="1" />
      <rect x="346" y="472" width="186" height="50" fill="#fff" />
      <g fill="none" stroke="#000" strokeWidth="6.5">
        <path d={slotH(101, 166, 472, 496)} />
        <path d={slotH(172, 238, 472, 496)} />
        <path d={slotH(374, 435, 486, 510)} />
        <path d={slotH(446, 511, 486, 510)} />
      </g>
      <g fill="none" stroke="#fff">
        <circle cx="240" cy="736" r="214" strokeWidth="4.5" />
        <circle cx="241" cy="737" r="165.5" strokeWidth="10.5" />
      </g>
      <polygon points={smallPts} fill="#fff" />
      <path d="M478,562 V556 Q490,542 503,542 Q516,542 526,556 V562 Z" fill="#fff" />
      <path d="M527,562 V594" stroke="#666" strokeWidth="1" />
      <rect x="478" y="594" width="48" height="186" fill="#fff" />
      <g fill="none" stroke="#000" strokeWidth="6.5">
        <path d={slotV(487, 516, 622, 686)} />
        <path d={slotV(487, 516, 694, 758)} />
      </g>
    </svg>
  );
}

function ViewerDialog() {
  return (
    <div className="absolute left-[670px] top-[235px] w-[1601px] h-[1244px] flex flex-col bg-[#ececec] rounded-t-[12px] rounded-b-[6px] shadow-[0_22px_50px_rgba(0,0,0,0.42)]">
      <div className="grid grid-cols-[1fr_auto_1fr] items-center h-[44px] shrink-0 rounded-t-[12px] border-b-2 border-[#a8a8a8] bg-gradient-to-b from-[#e8e8e8] to-[#d0d0d0]">
        <div className="flex gap-[16px] pl-[16px]">
          <span className="w-[24px] h-[24px] rounded-full bg-[#ef6258]" />
          <span className="w-[24px] h-[24px] rounded-full bg-[#f6bd3e]" />
          <span className="w-[24px] h-[24px] rounded-full bg-[#5dc84c]" />
        </div>
        <span className="pt-[4px] text-[25.3px] font-semibold text-[#555] font-['Open_Sans',sans-serif]">ANYCUBIC Photon file viewer</span>
        <span />
      </div>
      <div className="flex items-center h-[40px] mt-[34px] pl-[24px] text-[19.5px] text-[#111] font-['DejaVu_Sans',sans-serif] whitespace-nowrap shrink-0">
        <span className="w-[242px]">Thickness:0.05mm</span>
        <span className="w-[239px]">XYPixel:47.25um</span>
        <span className="w-[243px]">Total Layers:204</span>
        <span className="w-[257px] text-[#e61ad8]">Total Volumes:11.55ml</span>
        <button className="w-[229px] h-[40px] rounded-[8px] bg-white border-2 border-[#c4c4c4] text-center">More Information</button>
        <button className="ml-[29px] w-[222px] h-[40px] rounded-[8px] bg-white border-2 border-[#c4c4c4] text-center">Export</button>
      </div>
      <div className="flex mt-[44px] h-[1058px] shrink-0">
        <div className="w-[161px] shrink-0 flex flex-col pb-[1px]">
          <div className="flex ml-[32px] mt-[1px]">
            <div className="w-[65px] h-[37px] bg-white border-2 border-[#8a8a8a] shadow-[0_0_0_6px_#cdd9ee] text-[24px] leading-[33px] pl-[3px] text-black font-['DejaVu_Sans',sans-serif]">0</div>
            <div className="ml-[6px] w-[22px] h-[41px] -mt-[1px] flex flex-col items-center justify-center bg-white border border-[#cccccc] rounded-[6px]">
              <svg width="12" height="26" viewBox="0 0 12 26" fill="none" stroke="#555" strokeWidth="1.5">
                <path d="M2,7 L6,3 L10,7 M2,19 L6,23 L10,19" />
              </svg>
            </div>
          </div>
          <div className="ml-[32px] mt-[29px] w-[30px] flex-1 flex flex-col items-center">
            <div className="w-[6px] flex-1 bg-[#b5b5b5]" />
            <div className="w-[28px] h-[28px] rounded-full bg-[#dcdcdc] border border-[#a0a0a0] shrink-0" />
          </div>
        </div>
        <div className="w-[1414px] shrink-0 border-t border-l border-r-2 border-b-2 border-[#b6b6b6] bg-[#ebebeb]">
          <PreviewImage />
        </div>
      </div>
      <svg width="24" height="38" viewBox="0 0 24 38" className="absolute left-[40px] top-[1191px]">
        <path d="M2,1 L2,30 L9,23 L14,36 L19,34 L14,21 L23,21 Z" fill="#000" stroke="#fff" strokeWidth="2" />
      </svg>
    </div>
  );
}

function FinderWindow() {
  return (
    <div className="absolute left-[2365px] top-[936px] w-[175px] h-[818px] flex flex-col bg-[#282828] border-t-2 border-r-2 border-[#505050] rounded-tr-[8px] font-[Roboto,sans-serif] overflow-hidden">
      <div className="h-[48px] shrink-0" />
      <div className="h-[44px] w-[158px] shrink-0 rounded-r-[6px] bg-[#383838] border-y border-r border-[#444]" />
      <div className="h-[15px] shrink-0 border-b-2 border-[#444]" />
      <div className="h-[51px] shrink-0 flex items-center justify-end border-b-2 border-[#141414]">
        <div className="w-[46px] h-full bg-[#1c1c1c] border-l-2 border-[#5a5a5a] flex items-center justify-center">
          <svg width="24" height="24" viewBox="0 0 24 24" stroke="#7a7a7a" strokeWidth="1.4">
            <path d="M12,1 V23 M1,12 H23" />
          </svg>
        </div>
      </div>
      <div className="h-[45px] shrink-0 flex items-center border-b-2 border-[#444] bg-[#2a2a2a]">
        <span className="ml-[29px] h-[32px] border-l border-[#555]" />
        <span className="ml-[26px] text-[23px] text-[#c8c8c8]">Wielkość</span>
      </div>
      <div className="flex flex-col shrink-0">
        {Array.from({ length: 15 }).map((_, i) => (
          <div key={i} className={i % 2 === 0 ? "h-[38px] bg-[#272727]" : "h-[38px] bg-[#1a1a1a]"} />
        ))}
      </div>
      <div className="flex-1 border-t-2 border-[#444] bg-[#272727]" />
    </div>
  );
}

function DesktopIcons() {
  return (
    <div className="absolute left-[2382px] top-[10px] grid grid-cols-[244px_244px] auto-rows-[224px] font-[Inter,sans-serif]">
      {deskItems.map((it, i) => (
        <div key={i} className="flex flex-col items-center">
          {i === 1 ? (
            <div className="flex flex-col items-center">
              <div className="w-[144px] h-[143px] rounded-[6px] border-4 border-[#555] flex items-center justify-center">
                <DiskIcon />
              </div>
              <span className="mt-[5px] w-[138px] h-[34px] rounded-[6px] bg-[#cccccc] text-center text-[22px] leading-[34px] font-semibold tracking-[1px] text-[#555]">PENDRIVE</span>
            </div>
          ) : (
            <>
              <div className="h-[148px] pt-[10px] flex justify-center shrink-0">{it.icon}</div>
              <div className="mt-[2px] w-full flex flex-col items-center">
                {it.label.map((l) => (
                  <span
                    key={l.text}
                    className={`text-[25px] leading-[32px] font-semibold text-white whitespace-nowrap [text-shadow:0_1px_3px_rgba(0,0,0,0.7)] ${l.cls ?? ""}`}
                  >
                    {l.text}
                  </span>
                ))}
              </div>
            </>
          )}
        </div>
      ))}
    </div>
  );
}

function Desktop() {
  return (
    <div className="relative flex-1 bg-black overflow-hidden rounded-b-[12px]">
      {/* white window fragments left behind the icon grid */}
      <div className="absolute left-[2413px] top-[701px] w-[29px] h-[235px] bg-white" />
      <div className="absolute left-[2413px] top-[701px] w-[48px] h-[25px] bg-white" />
      <div className="absolute left-[2442px] top-[844px] w-[68px] h-[25px] bg-gradient-to-r from-white to-[#e8e8e8]" />
      <div className="absolute left-[2554px] top-[984px] w-[33px] h-[35px] bg-[#f0f0f0]" />
      <DesktopIcons />
      <span className="absolute left-[2270px] top-[608px] w-[100px] text-right text-[23px] leading-[32px] font-semibold text-white font-[Inter,sans-serif]">u</span>
      <span className="absolute left-[2270px] top-[832px] w-[100px] text-right text-[23px] leading-[32px] font-semibold text-white font-[Inter,sans-serif]">u</span>
      <Dock />
      <FinderWindow />
      <AppWindow />
      <ViewerDialog />
    </div>
  );
}

export default function App() {
  return (
    <div className="w-[3124px] h-[2110px] bg-white pt-[75px] pl-[111px] overflow-hidden">
      <div className="w-[2901px] h-[1887px] flex flex-col rounded-[18px] bg-[#636362] border border-[#1c1c1c] shadow-[0_30px_90px_rgba(0,0,0,0.75)]">
        <TitleBar />
        <div className="mx-[10px] h-[1798px] flex flex-col">
          <MenuBar />
          <Desktop />
        </div>
      </div>
    </div>
  );
}
